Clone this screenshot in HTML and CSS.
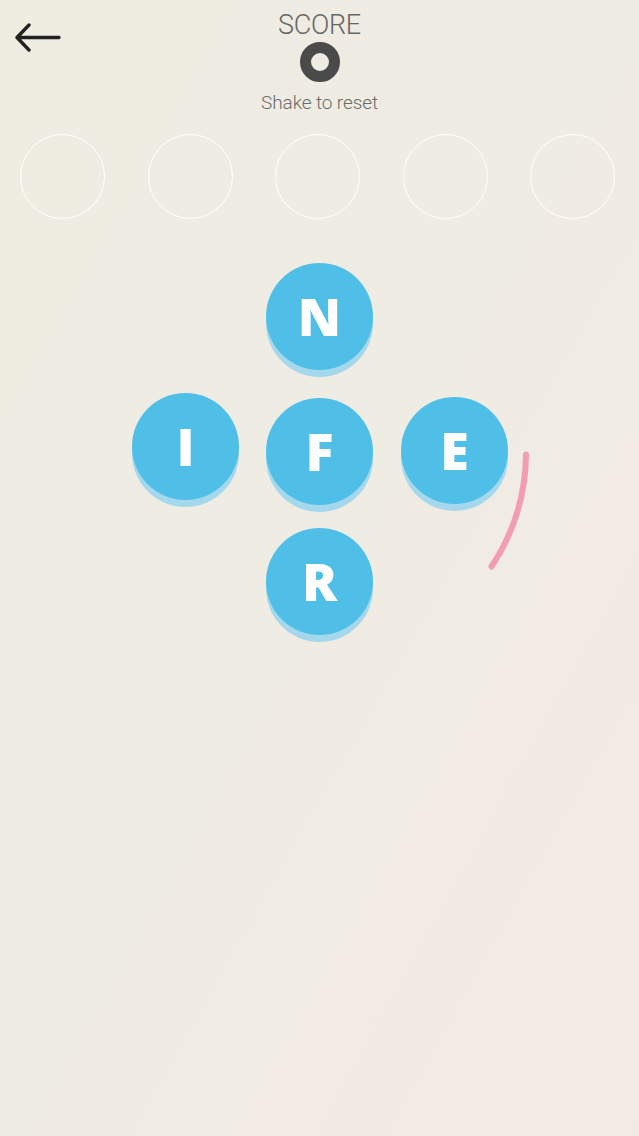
FILE: index.html
```html
<!DOCTYPE html>
<html>
<head>
<meta charset="utf-8">
<link rel="stylesheet" href="styles.css">
</head>
<body>
<div class="page">
  <header class="header">
    <button class="back" aria-label="Back">
      <svg width="48" height="30" viewBox="0 0 48 30">
        <path d="M3 14.5 H45 M15 2 L3 14.5 L15 27" fill="none" stroke="#222" stroke-width="3.4" stroke-linecap="round" stroke-linejoin="round"/>
      </svg>
    </button>
    <div class="score-label">SCORE</div>
    <div class="score-ring"></div>
    <div class="hint">Shake to reset</div>
  </header>

  <div class="slots">
    <div class="slot"></div>
    <div class="slot"></div>
    <div class="slot"></div>
    <div class="slot"></div>
    <div class="slot"></div>
  </div>

  <div class="board">
    <div class="tile t-n"><span>N</span></div>
    <div class="tile t-i"><span>I</span></div>
    <div class="tile t-f"><span>F</span></div>
    <div class="tile t-e"><span>E</span></div>
    <div class="tile t-r"><span>R</span></div>
    <svg class="timer" width="639" height="400" viewBox="0 251 639 400">
      <path d="M526 454.6 A207 207 0 0 1 491.5 566.5" fill="none" stroke="#f29db0" stroke-width="6" stroke-linecap="round"/>
    </svg>
  </div>
</div>
</body>
</html>
```

FILE: styles.css
```css
html, body {
  margin: 0;
  padding: 0;
}
body {
  width: 639px;
  height: 1136px;
  overflow: hidden;
}
.page {
  width: 639px;
  height: 1136px;
  background: linear-gradient(to bottom right, #eeede2 0%, #efece3 50%, #f4eae5 100%);
  font-family: Roboto, "Liberation Sans", sans-serif;
  position: relative;
}
.header {
  display: flex;
  flex-direction: column;
  align-items: center;
  padding-top: 12px;
  position: relative;
}
.back {
  position: absolute;
  left: 14px;
  top: 23px;
  padding: 0;
  margin: 0;
  border: 0;
  background: none;
  width: 48px;
  height: 30px;
  display: block;
}
.back svg { display: block; }
.score-label {
  font-size: 27px;
  font-weight: 300;
  line-height: 26px;
  color: #666;
  letter-spacing: -0.3px;
}
.score-ring {
  margin-top: 4px;
  width: 40px;
  height: 40px;
  box-sizing: border-box;
  border-radius: 50%;
  border: 11px solid #4a4a4a;
  margin-left: 1px;
}
.hint {
  margin-top: 12px;
  font-size: 19px;
  font-weight: 300;
  line-height: 18px;
  color: #6b6b6b;
  letter-spacing: -0.1px;
}
.slots {
  margin-top: 22px;
  display: flex;
  justify-content: space-between;
  padding: 0 24px 0 20px;
}
.slot {
  width: 85px;
  height: 85px;
  box-sizing: border-box;
  border-radius: 50%;
  border: 1.6px solid #ffffff;
}
.board {
  margin-top: 32px;
  display: grid;
  grid-template-columns: repeat(3, 134px);
  grid-template-rows: repeat(3, 132px);
  justify-content: center;
  justify-items: center;
  align-items: center;
  position: relative;
}
.tile {
  width: 107px;
  height: 107px;
  border-radius: 50%;
  background: #4fbfe8;
  box-shadow: 0 7px 0 #a6d8ed;
  display: flex;
  align-items: center;
  justify-content: center;
  color: #fff;
  font-family: "Open Sans", "DejaVu Sans", sans-serif;
  font-weight: 800;
  font-size: 52px;
}
.tile span { display: block; transform: translateY(-1px); }
.t-n { grid-column: 2; grid-row: 1; transform: translateY(-1px); }
.t-i { grid-column: 1; grid-row: 2; transform: translateY(-3px); }
.t-f { grid-column: 2; grid-row: 2; transform: translateY(2px); }
.t-e { grid-column: 3; grid-row: 2; transform: translate(1px, 1px); }
.t-r { grid-column: 2; grid-row: 3; }
.timer {
  position: absolute;
  left: 0;
  top: 0;
  pointer-events: none;
}
```
